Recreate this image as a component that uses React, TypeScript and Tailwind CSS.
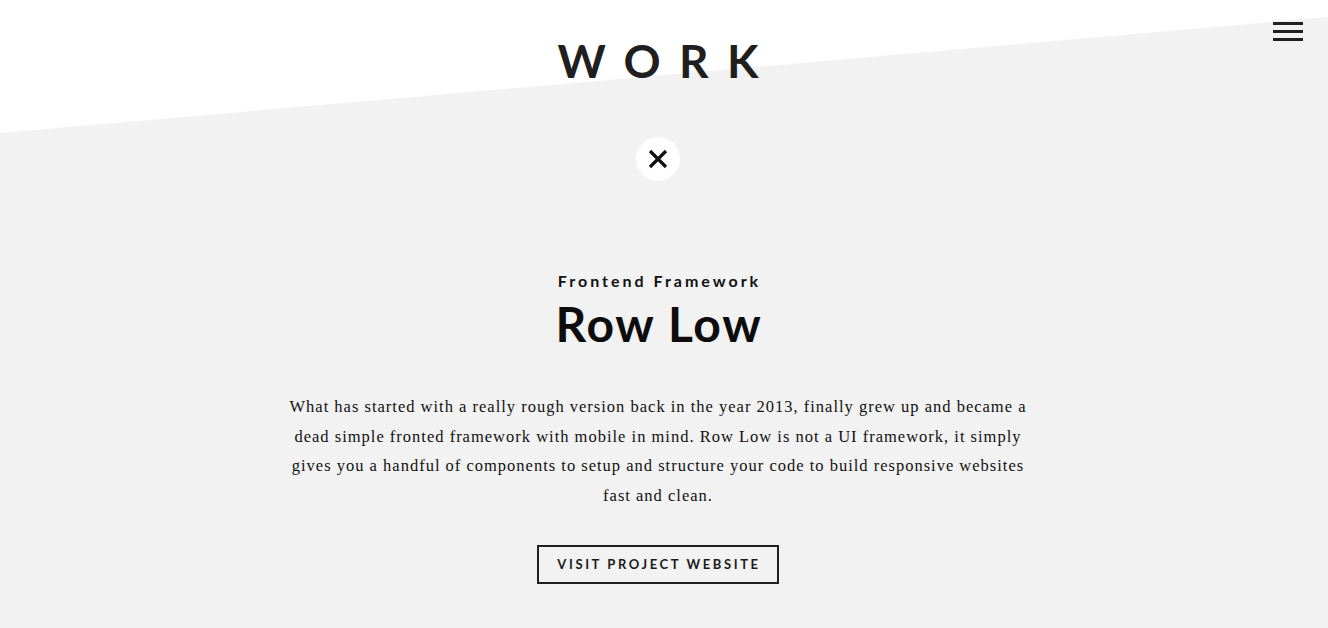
export default function App() {
  return (
    <div className="relative min-h-[628px] w-full overflow-hidden bg-white text-[#1b1b1b]">
      {/* slanted grey backdrop */}
      <svg
        className="absolute inset-0 h-full w-full"
        viewBox="0 0 1328 628"
        preserveAspectRatio="none"
        aria-hidden="true"
      >
        <polygon points="0,133 1328,17 1328,628 0,628" fill="#f2f2f2" />
      </svg>

      <button className="absolute right-[25px] top-[22px] flex w-[30px] flex-col gap-[5px]" aria-label="Menu">
        <span className="block h-[3px] w-full bg-[#1f1f1f]" />
        <span className="block h-[3px] w-full bg-[#1f1f1f]" />
        <span className="block h-[3px] w-full bg-[#1f1f1f]" />
      </button>

      <div className="relative flex flex-col items-center pr-[12px] font-['Lato',sans-serif]">
        <h1 className="mt-[38px] pl-[0.4em] text-[46px] font-bold leading-none tracking-[0.4em] text-[#1f1f1f]">
          WORK
        </h1>

        <button className="mt-[53px] flex h-[44px] w-[44px] items-center justify-center rounded-full bg-white" aria-label="Close">
          <svg width="20" height="20" viewBox="0 0 20 20">
            <path d="M2 2 L18 18 M18 2 L2 18" stroke="#111" strokeWidth="3.2" />
          </svg>
        </button>

        <p className="mt-[92px] pl-[3px] text-[16px] font-bold leading-none tracking-[3px] text-[#111]">
          Frontend Framework
        </p>
        <h2 className="mt-[11px] pl-[2px] text-[48px] font-bold leading-none tracking-[1.7px] text-[#0d0d0d]">
          Row Low
        </h2>

        <p className="mt-[44px] max-w-[750px] text-center font-['Liberation_Serif',serif] text-[16.5px] leading-[29.5px] tracking-[1px] text-[#111]">
          What has started with a really rough version back in the year 2013, finally grew up and became a dead simple
          fronted framework with mobile in mind. Row Low is not a UI framework, it simply gives you a handful of
          components to setup and structure your code to build responsive websites fast and clean.
        </p>

        <a
          href="#"
          className="mt-[35px] flex h-[39px] w-[242px] items-center justify-center border-2 border-[#1f1f1f] pl-[2px] text-[13px] font-bold tracking-[2.6px] text-[#1b1b1b]"
        >
          VISIT PROJECT WEBSITE
        </a>
      </div>
    </div>
  );
}
